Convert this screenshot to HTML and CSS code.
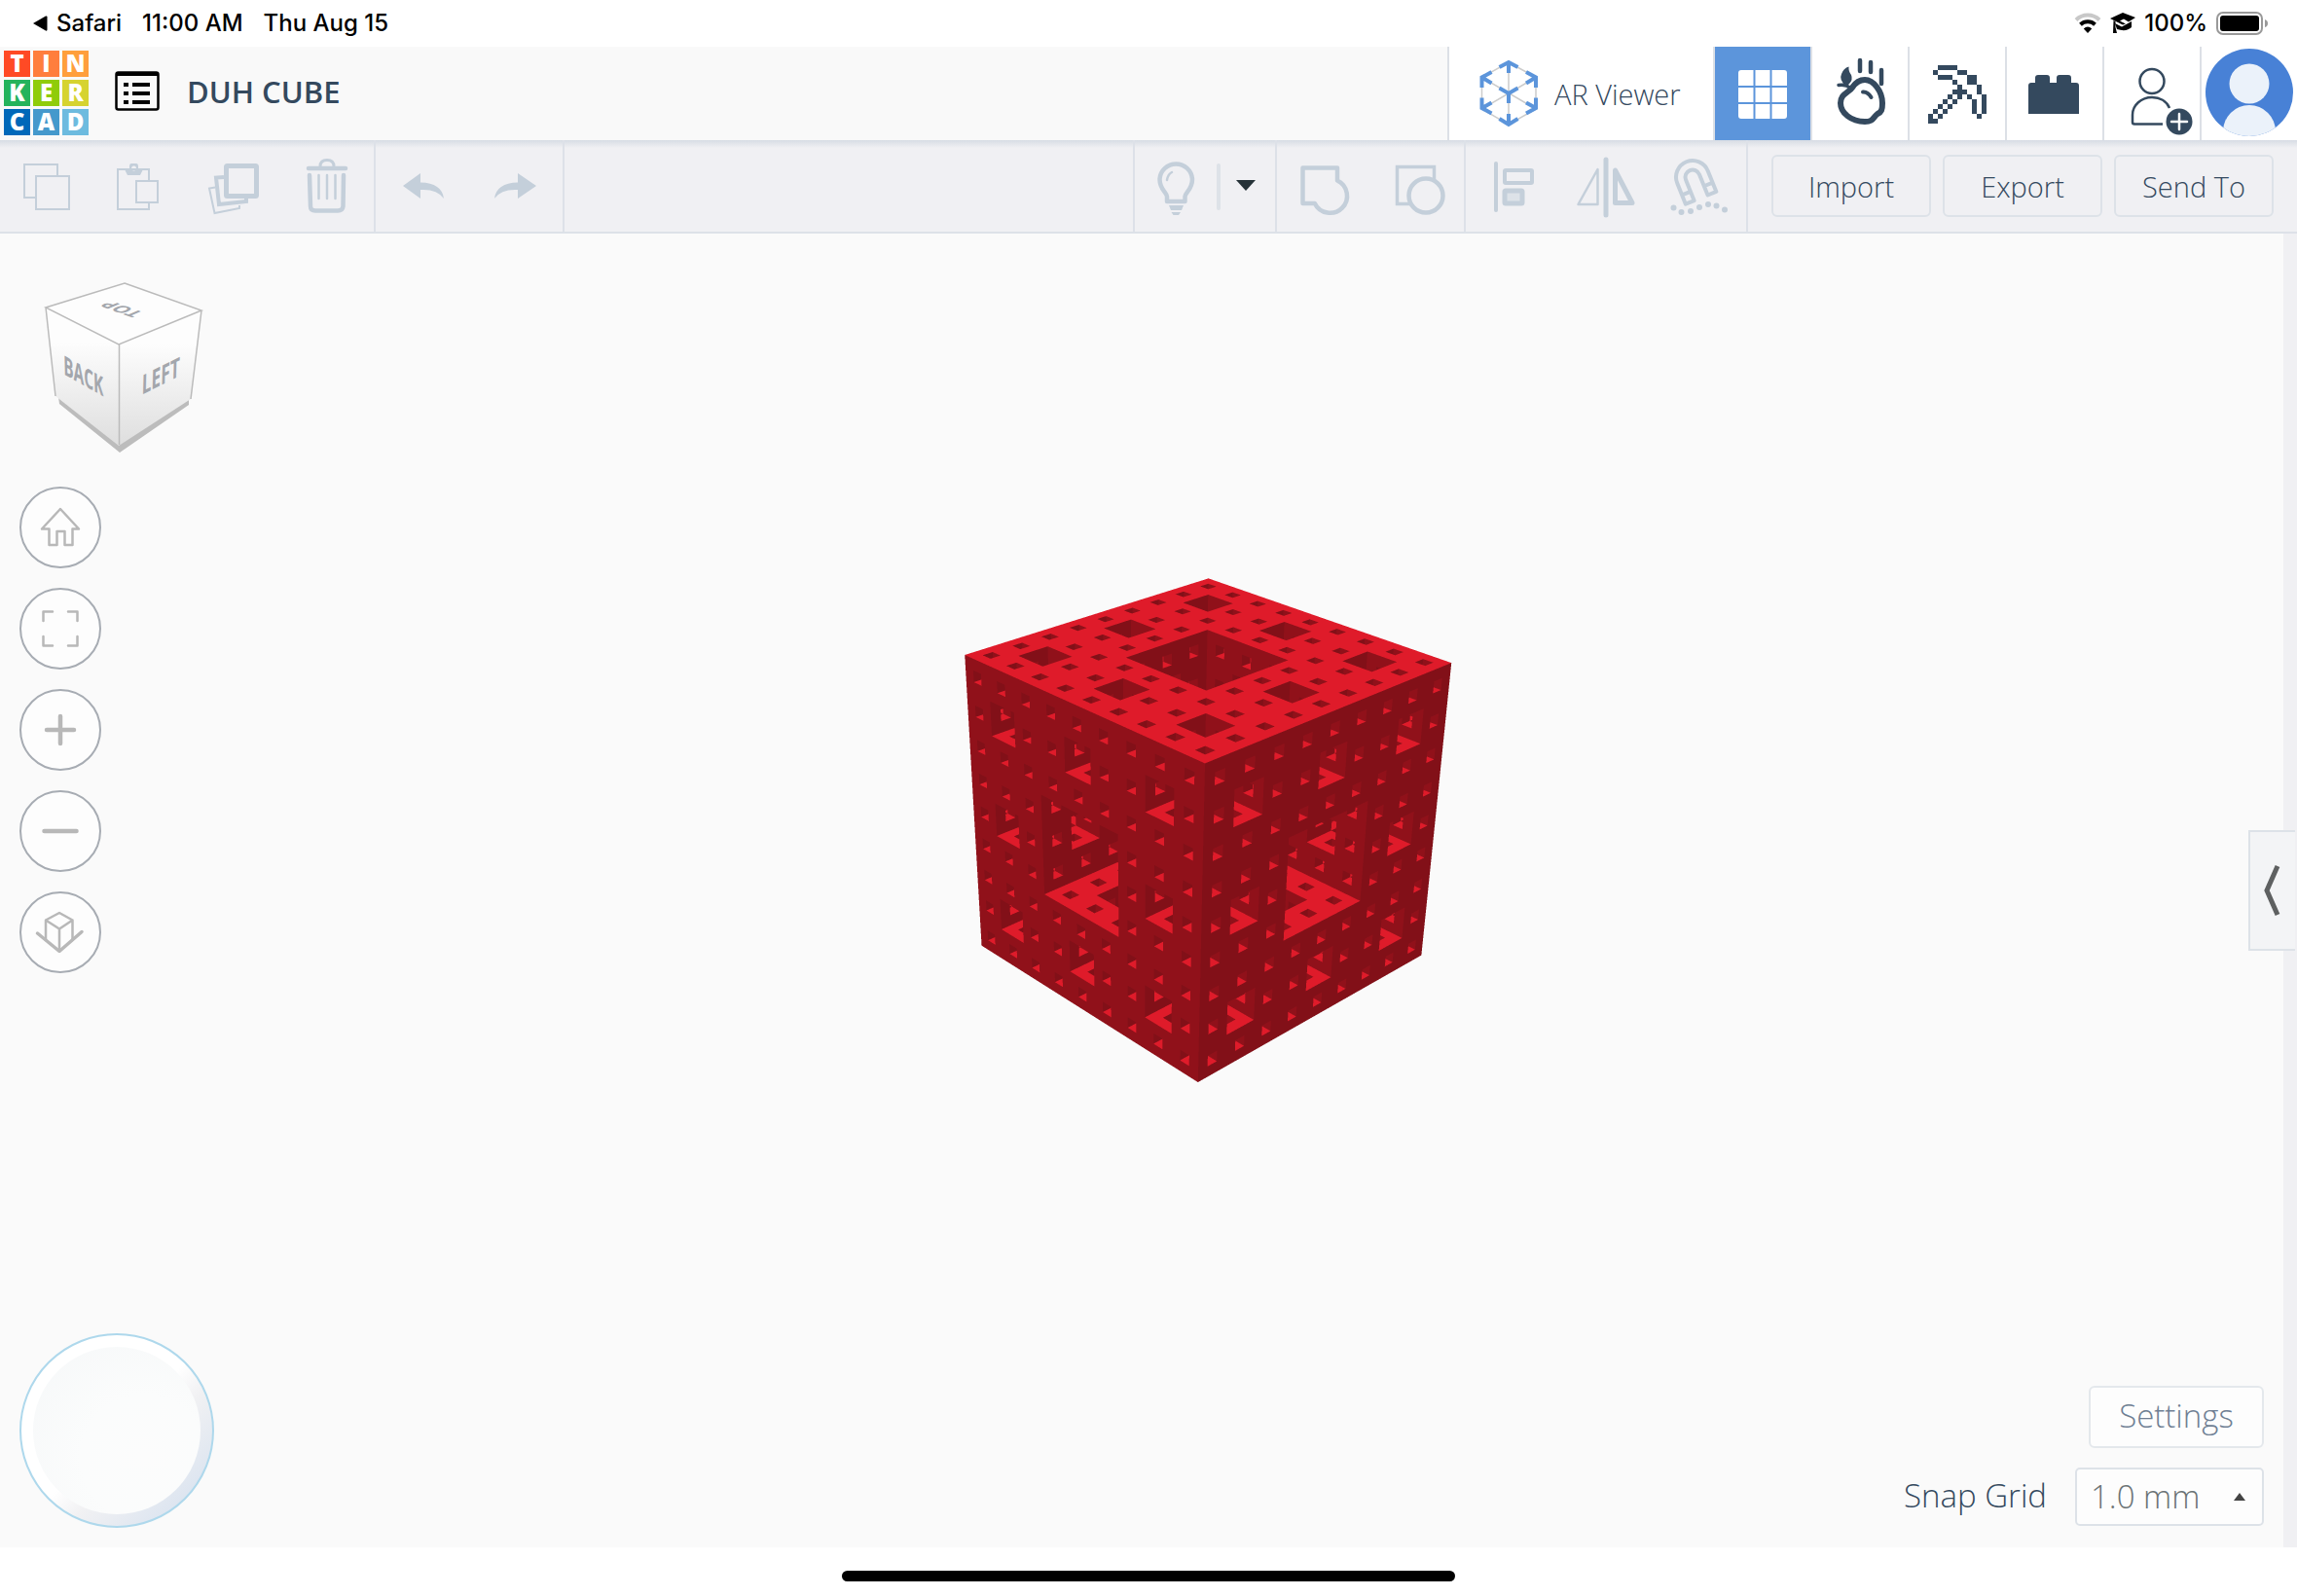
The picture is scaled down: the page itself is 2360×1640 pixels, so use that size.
FILE: index.html
```html
<!DOCTYPE html>
<html lang="en">
<head>
<meta charset="utf-8">
<title>DUH CUBE - Tinkercad</title>
<link rel="stylesheet" href="styles.css">
</head>
<body>
<div class="status">
  <div class="status-side">
    <a class="back" href="#"><svg width="16" height="18" viewBox="0 0 16 18"><path d="M1 9 14 1.500Q15.500 1 15.500 2.500V15.500Q15.500 17 14 16.500Z"/></svg>Safari</a>
    <span>11:00 AM</span>
    <span>Thu Aug 15</span>
  </div>
  <div class="status-side right">
    <svg width="28" height="22" viewBox="0 0 28 22"><path d="M2 7.500A17 17 0 0 1 26 7.500" fill="none" stroke="#c8c8c8" stroke-width="4"/><path d="M6.500 12.200A11 11 0 0 1 21.500 12.200" fill="none" stroke="#000" stroke-width="4"/><path d="M9.800 16.500Q14 12.500 18.200 16.500L14 21Z"/></svg>
    <svg width="26" height="24" viewBox="0 0 26 24"><path d="M0 7 13 1 26 6 19 10.500 14 7.500 10 9.500 16 12.500 13 13.500Z"/><path d="M5 12 12 15.500 22 10V16Q17 21 7 18Z"/><path d="M3.500 9 5.500 10V16L7 22H3Z"/></svg>
    <span>100%</span>
    <svg width="54" height="24" viewBox="0 0 54 24"><rect x="1" y="1" width="46" height="22" rx="6" fill="none" stroke="#999" stroke-width="2"/><rect x="4" y="4" width="40" height="16" rx="3"/><path d="M50 8Q53 9 53 12T50 16Z" fill="#999"/></svg>
  </div>
</div>

<header class="header">
  <a class="logo" href="#" aria-label="Tinkercad">
    <span class="t1">T</span><span class="t2">I</span><span class="t3">N</span>
    <span class="t4">K</span><span class="t5">E</span><span class="t6">R</span>
    <span class="t7">C</span><span class="t8">A</span><span class="t9">D</span>
  </a>
  <button class="list" aria-label="Designs"><svg width="46" height="42" viewBox="0 0 46 42"><rect x="1.500" y="1.500" width="43" height="38" rx="2" fill="none" stroke="#000" stroke-width="2.500"/><path d="M2 1H44V5H2Z"/><path d="M9 12h5v4H9zM18 12h18v4H18zM9 21h5v4H9zM18 21h18v4H18zM9 30h5v4H9zM18 30h18v4H18z"/></svg></button>
  <h1 class="title">DUH CUBE</h1>
  <nav class="modes">
    <button class="ar">
      <svg width="60" height="70" viewBox="0 0 60 70" fill="none"><path d="M30 3 58 18.500V51L30 67 2.500 51V18.500ZM30 3V67M2.500 18.500 58 51M58 18.500 2.500 51" stroke="#ccc" stroke-width="1.500"/><path d="M20.500 8 30 3 39.500 8M30 3V14M12.500 13 2.500 18.500V29M2.500 18.500 12.500 24.500M48 13 58 18.500V29M58 18.500 48 24.500M20.500 29.500 30 35 39.500 29.500M30 35V45M2.500 39.500V50L12.500 55.500M2.500 50 12.500 44.500M58 39.500V50L48 55.500M58 50 48 44.500M20.500 61 30 67 39.500 61M30 67V56" stroke="#5c95db" stroke-width="4"/></svg>
      AR Viewer
    </button>
    <button class="mode active" aria-label="3D design"><svg width="98" height="96" viewBox="0 0 98 96" fill="#fff"><path d="M27 24H39.500V40H24V27Q24 24 27 24ZM41.500 24H56.500V40H41.500ZM58.500 24H71Q74 24 74 27V40H58.500ZM24 42H39.500V57H24ZM41.500 42H56.500V57H41.500ZM58.500 42H74V57H58.500ZM24 59H39.500V74H27Q24 74 24 71ZM41.500 59H56.500V74H41.500ZM58.500 59H74V71Q74 74 71 74H58.500Z"/></svg></button>
    <button class="mode" aria-label="Sim Lab"><svg width="98" height="96" viewBox="0 0 98 96" fill="none" stroke="#34495e" stroke-linecap="round"><path d="M49 14V25M60 16V26M71 24V38" stroke-width="4.500"/><path d="M35 41Q27 34 30 28 32 22 37.500 20.500 37 25 40 29 42 34 38 38Z" fill="#34495e" stroke="none"/><path d="M27 39.500Q34 38 40 43" stroke-width="3.500"/><path d="M54 34C63 34 72 46 72 58C72 65 71 67 67 69C62 73 63 77 54 77C40 77 29 68 29 58C29 48 37 48 41 42C45 36 49 34 54 34Z" stroke-width="6"/><path d="M52 46.500Q57 46 60.500 52" stroke-width="4"/></svg></button>
    <button class="mode" aria-label="Blocks"><svg width="98" height="96" viewBox="0 0 98 96"><path transform="translate(18 19)" stroke="#34495e" stroke-width="5" d="M11 2.500h20M6 7.500h5M31 7.500h10M11 12.500h15M41 12.500h10M26 17.500h5M41 17.500h10M31 22.500h5M51 22.500h5M26 27.500h15M51 27.500h5M21 32.500h5M31 32.500h5M41 32.500h5M56 32.500h5M16 37.500h5M26 37.500h5M46 37.500h5M56 37.500h5M11 42.500h5M21 42.500h5M46 42.500h5M56 42.500h5M6 47.500h5M16 47.500h5M46 47.500h5M56 47.500h5M1 52.500h5M11 52.500h5M51 52.500h5M1 57.500h10"/></svg></button>
    <button class="mode" aria-label="Bricks"><svg width="98" height="96" viewBox="0 0 98 96" fill="#34495e"><path d="M22 69V40Q22 37 25 37H29V32Q29 29 32 29H41Q44 29 44 32V37H51V32Q51 29 54 29H63Q66 29 66 32V37H71Q74 37 74 40V69Z"/></svg></button>
    <button class="mode" aria-label="Invite people"><svg width="98" height="96" viewBox="0 0 98 96" fill="none" stroke="#34495e" stroke-width="2.500"><circle cx="49" cy="35.500" r="12.500"/><path d="M60 79.500H31Q29 79.500 29 77.500V70C29 60 38 52 49 52C57 52 64 56 67 63"/><circle cx="77" cy="77" r="13.500" fill="#34495e" stroke="none"/><path d="M77 69V85M69 77H85" stroke="#fff" stroke-linecap="round"/></svg></button>
    <button class="mode" aria-label="Account"><svg width="98" height="96" viewBox="0 0 98 96"><clipPath id="disc"><circle cx="49" cy="47" r="45"/></clipPath><circle cx="49" cy="47" r="45" fill="#4881d6"/><circle cx="49" cy="38" r="20.500" fill="#ebf2fa"/><circle cx="49" cy="87" r="27" fill="#ebf2fa" clip-path="url(#disc)"/></svg></button>
  </nav>
</header>

<div class="toolbar">
  <div class="group">
    <button aria-label="Copy"><svg viewBox="0 0 96 94"><path d="M37 59H25V25H59V37" /><rect x="37" y="37" width="34" height="34"/></svg></button>
    <button aria-label="Paste"><svg viewBox="0 0 96 94"><path d="M57 41V30H25V71H57V65"/><rect x="44" y="42" width="22" height="22"/><path d="M32 30H37V27Q37 24 39 24H44Q46 24 46 27V30H51L48 36H35ZM41.500 26.500A2.500 2.500 0 1 0 41.600 26.500Z" fill="#c4cfda" stroke="none" fill-rule="evenodd"/></svg></button>
    <button aria-label="Duplicate"><svg viewBox="0 0 96 94"><path d="M29 48.500 23 49.500 28.500 75 54 70V67"/><path d="M38 38 30 38.500 33 66 61 63V60" stroke-width="4"/><rect x="40.500" y="26.500" width="31" height="31" rx="1" stroke-width="5"/></svg></button>
    <button aria-label="Delete"><svg viewBox="0 0 96 94"><path d="M30 36 31 68Q31 72.500 36 72.500H59Q64 72.500 64.500 68L65 36" stroke-width="4.500" stroke-linecap="round"/><path d="M29 29H67" stroke-width="4.500" stroke-linecap="round"/><path d="M41 27Q41 20.500 48 20.500T55 27" stroke-width="3"/><path d="M39.500 36V60M48 36V60M56.500 36V60" stroke-width="2.500" stroke-linecap="round"/></svg></button>
  </div>
  <div class="group">
    <button aria-label="Undo"><svg viewBox="0 0 96 94"><path class="solid" d="M28 47 46 34V43.500Q68 44 70 60 63 50 46 51V60Z"/></svg></button>
    <button aria-label="Redo"><svg viewBox="0 0 96 94"><path class="solid" d="M69 47 50 34V43.500Q28 44 26 60 33 50 50 51V60Z"/></svg></button>
  </div>
  <div class="group push">
    <button class="bulb" aria-label="Show all"><svg viewBox="0 0 84 94"><path d="M33 63H51.500V58C52 53 59 51 59 40A16.800 16.800 0 0 0 25.500 40C25.500 51 32.500 53 33 58Z" stroke-width="4.500" stroke-linejoin="round"/><path d="M33 41Q34 35 38 33" stroke-width="2.500" stroke-linecap="round"/><path class="solid" d="M35 67H50L48 72H37ZM37.500 74H47L45 77H39.500Z"/></svg></button>
    <button class="drop" aria-label="Visibility options"><svg viewBox="0 0 60 94"><path d="M2 26V70" stroke="#dde2e8" stroke-width="4" stroke-linecap="round"/><path d="M20 41H40L30 52Z" fill="#263238" stroke="none"/></svg></button>
  </div>
  <div class="group">
    <button aria-label="Group"><svg viewBox="0 0 96 94"><path d="M26.500 28.500H62V41.500A17.500 17.500 0 1 1 38.800 65H26.500Z" stroke-width="4.500" stroke-linejoin="round"/></svg></button>
    <button aria-label="Ungroup"><svg viewBox="0 0 96 94"><path d="M41 65.500H27.500V27.500H65.500V41" stroke-width="3.500"/><ellipse cx="57" cy="57" rx="17.500" ry="17.500" stroke-width="4.500"/></svg></button>
  </div>
  <div class="group">
    <button aria-label="Align"><svg viewBox="0 0 96 94"><path d="M31 24V72" stroke-width="4" stroke-linecap="round"/><rect x="40" y="31" width="28" height="13" rx="1" stroke-width="4"/><rect x="40" y="52" width="18" height="13" rx="1" stroke-width="5" fill="#dde2e8"/></svg></button>
    <button aria-label="Mirror"><svg viewBox="0 0 96 94"><path d="M48 20V77" stroke-width="5" stroke-linecap="round"/><path d="M39.500 30V66H19.500Z" stroke-width="2.500" stroke-linejoin="round"/><path d="M57.500 31V64.500H75Z" stroke-width="5" stroke-linejoin="round"/></svg></button>
    <button aria-label="Snap"><svg viewBox="0 0 96 94"><path transform="translate(41 38) rotate(-22)" d="M-17 23V0A17 17 0 0 1 17 0V23H7.500V0A7.500 7.500 0 0 0-7.500 0V23ZM-17 13H-7.500M17 13H7.500" stroke-width="4" stroke-linejoin="round"/><g class="solid"><circle cx="21.500" cy="69.500" r="3"/><circle cx="29.500" cy="74" r="3"/><circle cx="39" cy="73" r="3"/><circle cx="48" cy="69" r="3"/><circle cx="57" cy="66" r="3"/><circle cx="65.500" cy="67.500" r="3"/><circle cx="74" cy="71.500" r="3"/></g></svg></button>
  </div>
  <div class="actions">
    <button>Import</button>
    <button>Export</button>
    <button>Send To</button>
  </div>
</div>

<main class="work">
  <canvas class="model" id="model" width="540" height="560"></canvas>
  <div class="nav">
    <svg class="viewcube" width="180" height="192" viewBox="30 280 180 192">
      <defs><linearGradient id="side" x1="0" y1="0" x2="0" y2="1"><stop offset=".25" stop-color="#fdfdfd"/><stop offset="1" stop-color="#dedede"/></linearGradient></defs>
      <path d="M60 408 123 456 194 410V416L123 465 61 415Z" fill="#bcbcbc"/>
      <path d="M47 316 122 354V458L57 407Z" fill="url(#side)"/><path d="M207 319 122 354V458L196 410Z" fill="url(#side)"/><path d="M128 291 207 319 122 354 47 316Z" fill="#fdfdfd"/>
      <path d="M128 291 207 319 122 354 47 316ZM47 316 57 407M207 319 196 410M122.500 354V457" fill="none" stroke="#bbb" stroke-width="1.500"/>
      <text transform="matrix(.64 .36 .03 1.150 86 396)">BACK</text>
      <text transform="matrix(.72 -.36 -.03 1.150 165 396)">LEFT</text>
      <text transform="matrix(-.72 -.26 .7 -.3 131 315)">TOP</text>
    </svg>
    <button aria-label="Home view"><svg viewBox="0 0 84 84"><path d="M42 23 23 43.500H30.500V60H38.500V46H46.500V60H54.500V43.500H61Z" stroke-width="2.500"/></svg></button>
    <button aria-label="Fit view"><svg viewBox="0 0 84 84"><path d="M24.500 34V24.500H34M50 24.500H59.500V34M59.500 50V59.500H50M34 59.500H24.500V50" stroke-width="2.500"/></svg></button>
    <button aria-label="Zoom in"><svg viewBox="0 0 84 84"><path d="M28 42H56M42 28V56" stroke-width="4.500"/></svg></button>
    <button aria-label="Zoom out"><svg viewBox="0 0 84 84"><path d="M25.500 42H58.500" stroke-width="4.500"/></svg></button>
    <button aria-label="Orthographic view"><svg viewBox="0 0 84 84"><path d="M41 22 54.500 29.500 41 38.500 27 29.500ZM27 29.500V50M54.500 29.500V50M41 38.500V61" stroke-width="2.500"/><path d="M18.500 43 41 61.500 64 41.500" stroke-width="3.500"/></svg></button>
  </div>
  <div class="orb"></div>
  <div class="edge"></div>
  <button class="handle" aria-label="Open shapes panel"><svg width="18" height="54" viewBox="0 0 18 54"><path d="M14 2 3 27 14 52" fill="none" stroke="#5e6061" stroke-width="5"/></svg></button>
  <div class="options">
    <button class="settings">Settings</button>
    <div class="snap">
      <label for="grid">Snap Grid</label>
      <div class="pick">
        <select id="grid"><option>1.0 mm</option><option>0.5 mm</option><option>2.0 mm</option></select>
        <svg width="12" height="8" viewBox="0 0 12 8"><path d="M0 8 6 0 12 8Z" fill="#444"/></svg>
      </div>
    </div>
  </div>
</main>
<footer class="foot"><div class="homebar"></div></footer>
<script src="sponge.js"></script>
</body>
</html>
```
FILE: styles.css
```css
* { box-sizing: border-box; }
body {
  margin: 0;
  min-height: 100vh;
  display: flex;
  flex-direction: column;
  background: #fff;
  color: #34495e;
  font-family: "Open Sans", "Noto Sans", sans-serif;
}
button {
  margin: 0;
  padding: 0;
  border: 0;
  background: none;
  color: inherit;
  font: inherit;
}
svg { display: block; flex: none; }

.status {
  height: 48px;
  display: flex;
  justify-content: space-between;
  padding: 0 29px 0 33px;
  color: #000;
  font: 500 24px/48px Inter, sans-serif;
}
.status-side { display: flex; align-items: center; gap: 21px; }
.right { gap: 9px; }
.back { display: flex; align-items: center; gap: 9px; color: inherit; text-decoration: none; }

.header {
  height: 96px;
  display: flex;
  align-items: center;
  background: #f9f9f9;
}
.logo {
  display: grid;
  grid-template-columns: repeat(3, 27px);
  grid-auto-rows: 27px;
  gap: 3px;
  margin: 0 27px 1px 4px;
  color: #fff;
  font-size: 24px;
  font-weight: 800;
  line-height: 26px;
  text-align: center;
  text-decoration: none;
}
.t1 { background: #ff4a25; }
.t2 { background: #ff7e3d; }
.t3 { background: #ff9f3c; }
.t4 { background: #24b35c; }
.t5 { background: #8fcc0a; }
.t6 { background: #d6d330; }
.t7 { background: #0068b9; }
.t8 { background: #4599cc; }
.t9 { background: #6dbbdf; }
.list { padding-bottom: 4px; }
.title { margin: 0 0 0 28px; padding-bottom: 4px; font-size: 31px; font-weight: 600; line-height: 40px; }
.modes { display: flex; height: 96px; margin-left: auto; background: #fff; }
.ar, .mode { border-left: 2px solid #dce0e6; }
.ar {
  display: flex;
  align-items: center;
  gap: 17px;
  width: 273px;
  padding-left: 31px;
  font-size: 29px;
  font-weight: 300;
}
.mode { width: 100px; }
.active { background: #5c95db; }

.toolbar {
  height: 96px;
  display: flex;
  border-bottom: 2px solid #dde1e8;
  background: linear-gradient(#d7dce4, #f0f0f3 8px);
}
.group { display: flex; border-right: 2px solid #dde1e8; }
.group button { width: 96px; }
.group .bulb { width: 84px; }
.group .drop { width: 60px; }
.group svg { width: 100%; fill: none; stroke: #c4cfda; stroke-width: 2px; }
.group .solid { fill: #c4cfda; stroke: none; }
.push { margin-left: auto; border-left: 2px solid #dde1e8; }
.actions { display: flex; align-items: center; gap: 12px; padding: 0 24px; }
.actions button {
  width: 164px;
  height: 64px;
  border: 2px solid #dde2e8;
  border-radius: 6px;
  font-size: 29px;
  font-weight: 300;
}

.work { position: relative; flex: 1; background: #fafafa; }
.model { position: absolute; left: calc(50% - 210px); top: 330px; }
.nav { display: flex; flex-direction: column; align-items: flex-start; gap: 20px; padding: 40px 20px 0; }
.viewcube { margin: 0 0 8px 10px; }
.viewcube text { fill: #a3a6ac; font-size: 24px; font-weight: 700; text-anchor: middle; }
.nav button {
  width: 84px;
  height: 84px;
  border: 2px solid #a7acb3;
  border-radius: 50%;
  background: #fdfdfd;
}
.nav button svg { margin: -2px; width: 84px; fill: none; stroke: #b8b8b8; stroke-linecap: round; stroke-linejoin: round; }
.orb {
  position: absolute;
  left: 20px;
  bottom: 20px;
  width: 200px;
  height: 200px;
  padding: 12px;
  border: 2px solid #aed8ec;
  border-radius: 50%;
  background: linear-gradient(135deg, #fff 50%, #f1f1f3 62%, #dbe4f0 88%);
}
.orb::before {
  content: "";
  display: block;
  height: 100%;
  border-radius: 50%;
  background: radial-gradient(circle at 66% 66%, #fcfcfc, #fbfcfc 40%, #f6f8f9 95%);
}
.edge { position: absolute; top: 0; right: 0; bottom: 0; width: 14px; background: #f0f0f3; }
.handle {
  position: absolute;
  right: 2px;
  top: 613px;
  width: 48px;
  height: 124px;
  display: flex;
  align-items: center;
  padding-left: 14px;
  border: 2px solid #dde2e8;
  border-right: 0;
  background: #f3f4f6;
}
.options {
  position: absolute;
  right: 34px;
  bottom: 22px;
  display: flex;
  flex-direction: column;
  align-items: flex-end;
  gap: 20px;
  font-size: 33px;
  font-weight: 300;
}
.settings {
  width: 180px;
  height: 64px;
  padding-bottom: 4px;
  border: 2px solid #e4e8ec;
  border-radius: 6px;
  background: #fdfdfd;
  color: #6f7f93;
}
.snap { display: flex; align-items: center; gap: 29px; }
.snap label { padding-bottom: 4px; }
.pick { display: grid; align-items: center; width: 194px; }
.pick > * { grid-area: 1 / 1; }
.pick svg { justify-self: end; margin-right: 19px; pointer-events: none; }
select {
  appearance: none;
  height: 60px;
  padding: 0 14px 2px;
  border: 2px solid #dde2e8;
  border-radius: 5px;
  background: #fdfdfd;
  color: #6b7375;
  font: inherit;
}

.foot { height: 50px; display: flex; justify-content: center; align-items: flex-start; padding-top: 24px; }
.homebar { width: 630px; height: 11px; border-radius: 6px; background: #000; }
```
FILE: sponge.js
```js
// Level 3 Menger sponge, ray cast into the work plane canvas.
const N = 27;

// Cube corners (unit coordinates) and where the camera puts them on the canvas.
const pins = [
  [1, 1, 1, 271.4, 24.3],
  [1, 0, 1, 21.4, 102.9],
  [0, 1, 1, 521.4, 111.4],
  [0, 0, 1, 267.9, 214.3],
  [1, 0, 0, 38.6, 401.8],
  [0, 1, 0, 490.4, 411.4],
  [0, 0, 0, 260.7, 542.1]
];
const S = 500;

function solve(A, b) {
  const n = b.length;
  for (let i = 0; i < n; i++) {
    let p = i;
    for (let r = i + 1; r < n; r++) if (Math.abs(A[r][i]) > Math.abs(A[p][i])) p = r;
    [A[i], A[p]] = [A[p], A[i]];
    [b[i], b[p]] = [b[p], b[i]];
    for (let r = 0; r < n; r++) {
      if (r === i) continue;
      const f = A[r][i] / A[i][i];
      for (let c = i; c < n; c++) A[r][c] -= f * A[i][c];
      b[r] -= f * b[i];
    }
  }
  return b.map((v, i) => v / A[i][i]);
}

// Least squares fit of the 3x4 projection matrix.
function camera() {
  const rows = [], rhs = [];
  for (const [x, y, z, px, py] of pins) {
    const u = px / S, v = py / S;
    rows.push([x, y, z, 1, 0, 0, 0, 0, -u * x, -u * y, -u * z]); rhs.push(u);
    rows.push([0, 0, 0, 0, x, y, z, 1, -v * x, -v * y, -v * z]); rhs.push(v);
  }
  const A = [], b = [];
  for (let i = 0; i < 11; i++) {
    A.push([]);
    for (let j = 0; j < 11; j++) A[i].push(rows.reduce((s, r) => s + r[i] * r[j], 0));
    b.push(rows.reduce((s, r, k) => s + r[i] * rhs[k], 0));
  }
  return solve(A, b);
}

function isSolid(x, y, z) {
  for (let k = 0; k < 3; k++) {
    if ((x % 3 === 1) + (y % 3 === 1) + (z % 3 === 1) > 1) return 0;
    x = x / 3 | 0; y = y / 3 | 0; z = z / 3 | 0;
  }
  return 1;
}

const grid = new Uint8Array(N * N * N);
for (let x = 0; x < N; x++) for (let y = 0; y < N; y++) for (let z = 0; z < N; z++)
  grid[(x * N + y) * N + z] = isSolid(x, y, z);

// Face colours by the axis that the ray crossed last.
const shade = [[130, 16, 24], [144, 17, 26], [223, 27, 42]];

function draw() {
  const p = camera();
  const col = j => solve([[p[0], p[1], p[2]], [p[4], p[5], p[6]], [p[8], p[9], p[10]]], j);
  const e0 = col([1, 0, 0]), e1 = col([0, 1, 0]), e2 = col([0, 0, 1]);
  const C = col([-p[3], -p[7], -1]).map(v => v * N);
  const dir = (u, v) => [0, 1, 2].map(i => u * e0[i] + v * e1[i] + e2[i]);
  const mid = dir(265 / S, 280 / S);
  const sign = mid.reduce((s, d, i) => s + d * (N / 2 - C[i]), 0) < 0 ? -1 : 1;

  const cv = document.getElementById("model"), ctx = cv.getContext("2d");
  const W = cv.width, H = cv.height, img = ctx.createImageData(W, H), Q = 3;
  const d = [0, 0, 0], c = [0, 0, 0], st = [0, 0, 0], tm = [0, 0, 0], td = [0, 0, 0];

  function cast(u, v) {
    let t0 = 0, t1 = Infinity, ax = -1;
    for (let i = 0; i < 3; i++) {
      d[i] = sign * (u * e0[i] + v * e1[i] + e2[i]);
      let a = -C[i] / d[i], b = (N - C[i]) / d[i];
      if (a > b) { const s = a; a = b; b = s; }
      if (a > t0) { t0 = a; ax = i; }
      if (b < t1) t1 = b;
    }
    if (t0 >= t1) return -1;
    for (let i = 0; i < 3; i++) {
      c[i] = Math.min(N - 1, Math.max(0, Math.floor(C[i] + d[i] * t0)));
      st[i] = d[i] > 0 ? 1 : -1;
      tm[i] = (c[i] + (d[i] > 0 ? 1 : 0) - C[i]) / d[i];
      td[i] = Math.abs(1 / d[i]);
    }
    for (;;) {
      if (grid[(c[0] * N + c[1]) * N + c[2]]) return ax;
      ax = tm[0] < tm[1] ? (tm[0] < tm[2] ? 0 : 2) : (tm[1] < tm[2] ? 1 : 2);
      c[ax] += st[ax];
      tm[ax] += td[ax];
      if (c[ax] < 0 || c[ax] >= N) return -1;
    }
  }

  for (let y = 0; y < H; y++) for (let x = 0; x < W; x++) {
    let r = 0, g = 0, b = 0, n = 0;
    for (let j = 0; j < Q; j++) for (let i = 0; i < Q; i++) {
      const a = cast((x + (i + 0.5) / Q) / S, (y + (j + 0.5) / Q) / S);
      if (a < 0) continue;
      r += shade[a][0]; g += shade[a][1]; b += shade[a][2]; n++;
    }
    if (!n) continue;
    const o = (y * W + x) * 4;
    img.data[o] = r / n; img.data[o + 1] = g / n; img.data[o + 2] = b / n;
    img.data[o + 3] = 255 * n / (Q * Q);
  }
  ctx.putImageData(img, 0, 0);
}

draw();
```
